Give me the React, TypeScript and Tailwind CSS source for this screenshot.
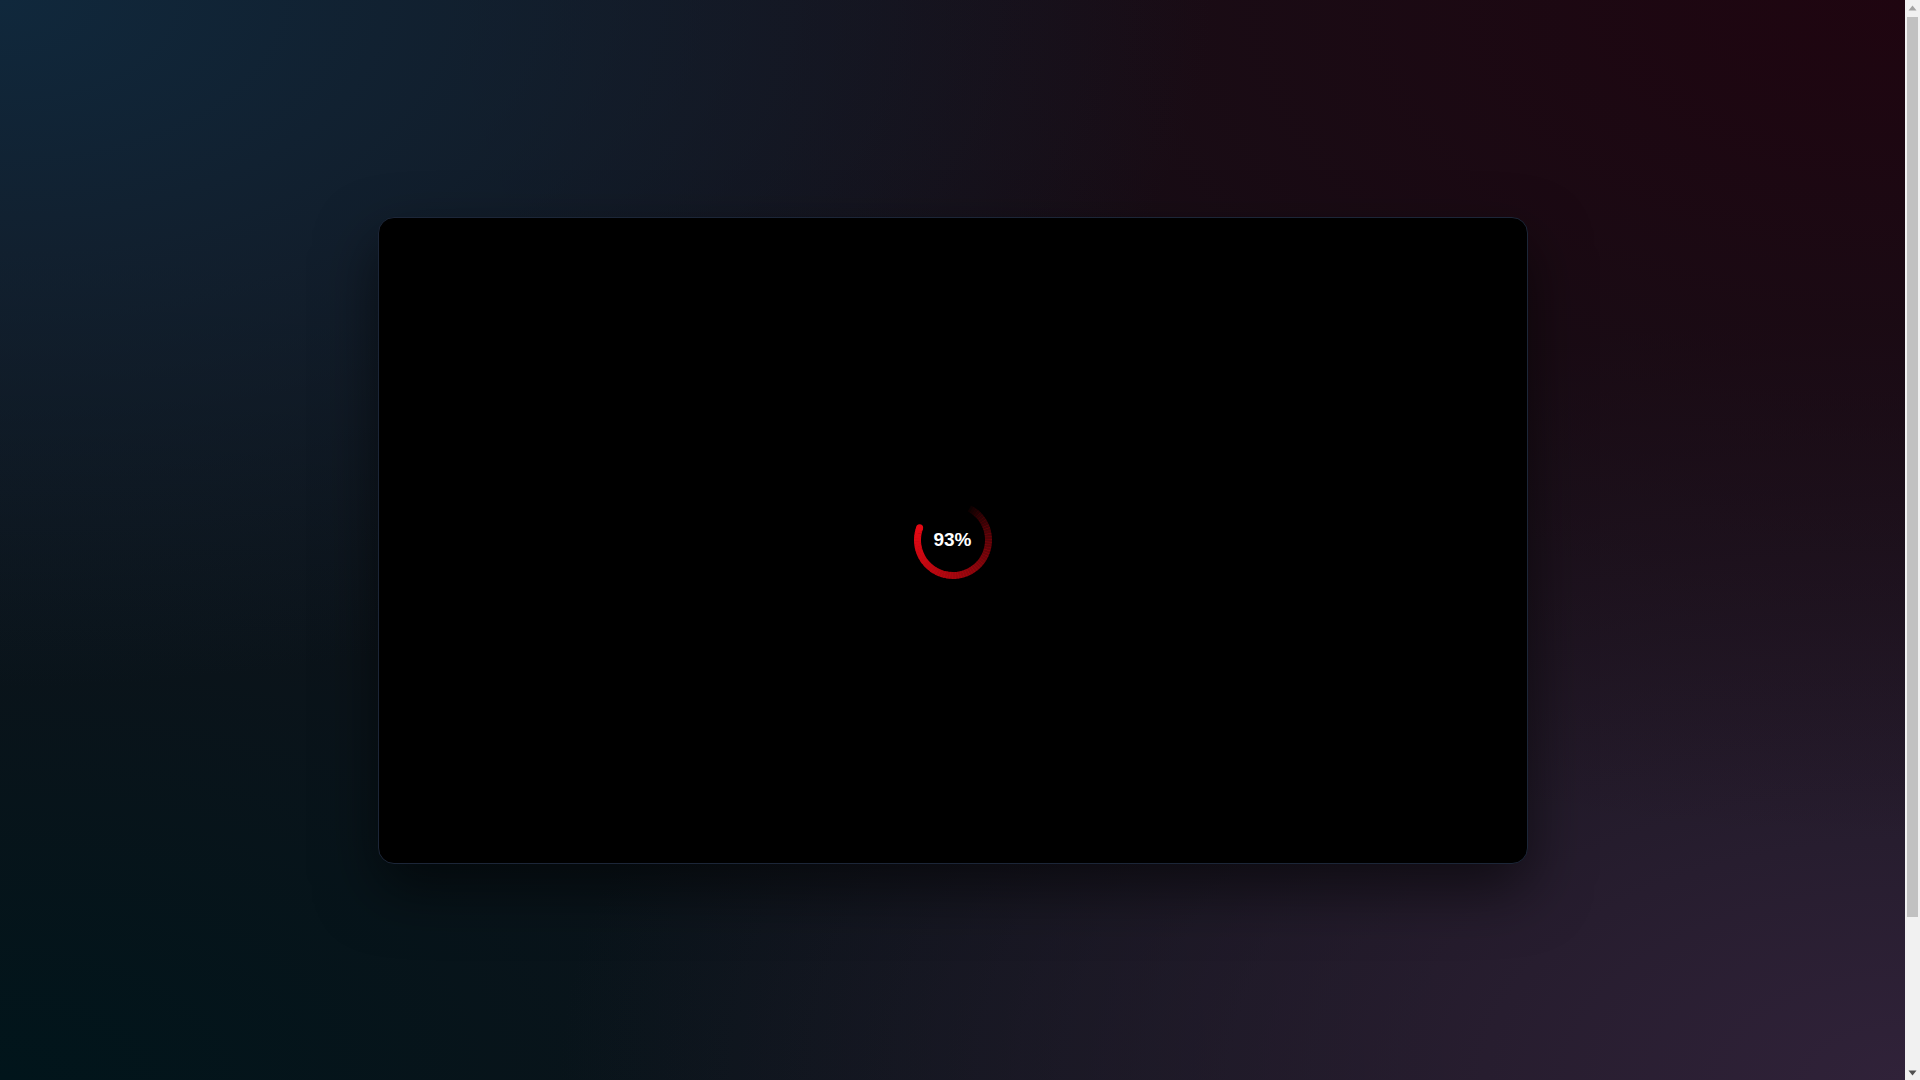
import React from "react";

const HEAD = 290;
const SWEEP = 262;
const STEPS = 60;
const R = 35.5;

function pt(deg: number): [number, number] {
  const rad = (deg * Math.PI) / 180;
  return [40 + R * Math.sin(rad), 40 - R * Math.cos(rad)];
}

function Spinner({ value }: { value: number }) {
  const step = SWEEP / STEPS;
  const segs = Array.from({ length: STEPS }, (_, i) => {
    const a1 = HEAD - i * step;
    const a2 = HEAD - (i + 1) * step - 0.6;
    const [x1, y1] = pt(a1);
    const [x2, y2] = pt(a2);
    const t = 1 - i / STEPS;
    return { d: `M ${x1} ${y1} A ${R} ${R} 0 0 0 ${x2} ${y2}`, o: Math.pow(t, 0.7) };
  });
  const [hx, hy] = pt(HEAD);
  return (
    <div className="relative w-20 h-20 flex items-center justify-center">
      <svg width="80" height="80" viewBox="0 0 80 80" className="absolute inset-0">
        {segs.map((s, i) => (
          <path key={i} d={s.d} fill="none" stroke="#e50914" strokeOpacity={s.o} strokeWidth="7" />
        ))}
        <circle cx={hx} cy={hy} r="3.5" fill="#e50914" />
      </svg>
      <span className="relative text-white font-bold text-[19px] font-['Liberation_Sans',Arial,sans-serif]">
        {value}%
      </span>
    </div>
  );
}

// window scrollbar as it shows in the capture
function Scrollbar() {
  return (
    <div className="w-[15px] h-full bg-[#f1f1f1] flex flex-col items-center">
      <div className="h-[15px] flex items-center justify-center">
        <svg width="9" height="6" viewBox="0 0 9 6"><path d="M4.5 0.5 L8.5 5.5 L0.5 5.5 Z" fill="#a3a3a3" /></svg>
      </div>
      <div className="flex-1 w-full px-[2px] pt-[2px]">
        <div className="w-full h-[900px] bg-[#c1c1c1]" />
      </div>
      <div className="h-[15px] flex items-center justify-center">
        <svg width="9" height="6" viewBox="0 0 9 6"><path d="M0.5 0.5 L8.5 0.5 L4.5 5.5 Z" fill="#505050" /></svg>
      </div>
    </div>
  );
}

export default function App() {
  return (
    <div className="h-screen w-full flex overflow-hidden">
      <main className="flex-1 h-full flex items-center justify-center bg-[#131219] bg-[radial-gradient(ellipse_at_top_left,#10283c_0%,rgba(16,40,60,0)_45%),radial-gradient(ellipse_at_top_right,#1f0510_0%,rgba(31,5,16,0)_55%),radial-gradient(ellipse_at_bottom_right,#302239_0%,rgba(48,34,57,0)_50%),radial-gradient(ellipse_at_bottom_left,#01151b_0%,rgba(1,21,27,0)_55%)]">
        <div className="w-[1150px] h-[647px] rounded-2xl border border-[#1c2638] bg-black shadow-[0_25px_60px_rgba(0,0,0,0.55)] flex items-center justify-center">
          <Spinner value={93} />
        </div>
      </main>
      <Scrollbar />
    </div>
  );
}
